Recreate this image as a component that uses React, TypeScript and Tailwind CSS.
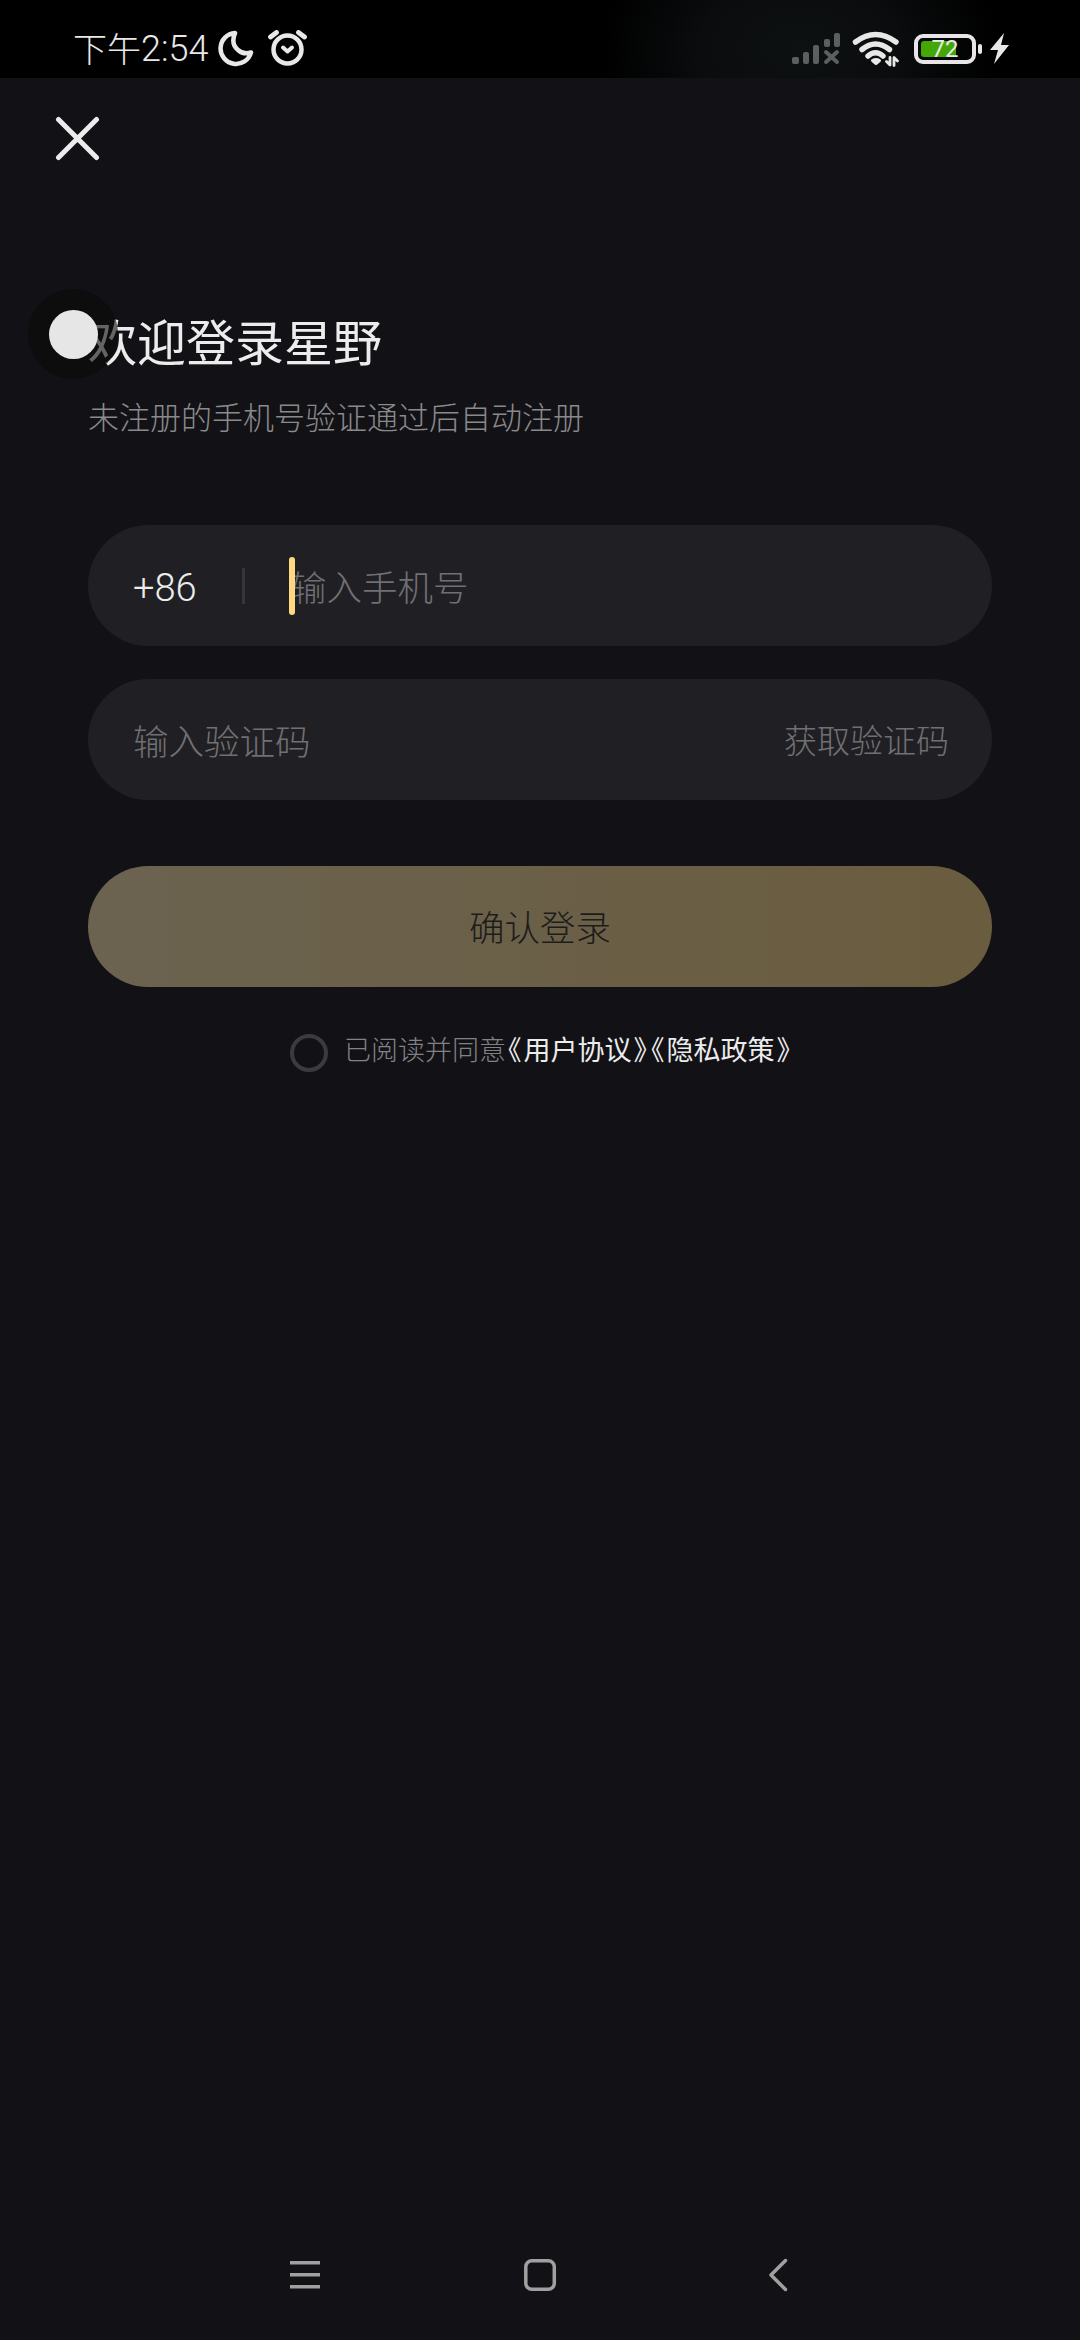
import type { ReactNode } from "react";

function SignalIcon() {
  return (
    <svg width="50" height="34" viewBox="790 32 50 34" fill="#5b5f60">
      <rect x="791" y="57" width="7" height="7" rx="2" />
      <rect x="802" y="52" width="6" height="12" rx="2" />
      <rect x="812" y="45" width="6" height="19" rx="2" />
      <rect x="823" y="39" width="6" height="8" rx="2" />
      <rect x="833" y="33" width="6" height="14" rx="2" />
      <path d="M825 52l11 10M836 52l-11 10" stroke="#5b5f60" strokeWidth="4" strokeLinecap="round" />
    </svg>
  );
}

function WifiIcon() {
  return (
    <svg width="48" height="38" viewBox="851 30 48 38" fill="none" stroke="#e8e8e8" strokeWidth="5.500" strokeLinecap="round">
      <path d="M854.500 42Q874.500 27 895 42" />
      <path d="M861 49.500Q874.500 38.500 888.500 49.500" />
      <path d="M867 56Q874.500 49.500 882 56" />
      <path d="M871.500 60.500Q875 58.500 878.500 60.500L875 63.500Z" strokeWidth="3" fill="#e8e8e8" strokeLinejoin="round" />
      <path d="M885.500 61.500l3.500 3.500V57.500M896.500 61l-3.500-3.500v8" strokeWidth="2.800" strokeLinejoin="round" />
    </svg>
  );
}

function MoonIcon() {
  return (
    <svg width="36" height="37" viewBox="218 30 36 37" fill="none" stroke="#e8e8e8" strokeWidth="4.500" strokeLinejoin="round">
      <path d="M235 33A15.500 15.500 0 1 0 251 52.500Q243.500 55 238 50Q230.500 43.500 235 33Z" />
    </svg>
  );
}

function AlarmIcon() {
  return (
    <svg width="40" height="37" viewBox="268 30 40 37" fill="none" stroke="#e8e8e8" strokeLinecap="round">
      <circle cx="287.500" cy="49.500" r="14" strokeWidth="4.500" />
      <path d="M270.500 37l6-4.500M304.500 37l-6-4.500" strokeWidth="4.800" />
      <path d="M283 47.500l4.500 4 4.500-4" strokeWidth="4" strokeLinejoin="round" />
    </svg>
  );
}

function Battery() {
  return (
    <div className="flex items-center">
      <div className="relative flex h-[30px] w-[62px] items-center rounded-[9px] border-[4.500px] border-[#e8e4e8] pl-[3px]">
        <div className="h-4 w-[35px] rounded-[3px] bg-[#43a806]" />
        <span className="absolute inset-0 flex items-center justify-center font-['Roboto',sans-serif] text-[24px] leading-none font-normal">
          72
        </span>
      </div>
      <div className="ml-[2px] h-[10px] w-1 rounded-sm bg-[#e8e8e8]" />
      <svg className="ml-[7px]" width="21" height="31" viewBox="0 0 21 31" fill="#e8e8e8">
        <path d="M15 0L1 17h8L5 31 20 12h-8z" />
      </svg>
    </div>
  );
}

function StatusBar() {
  return (
    <header className="flex h-[78px] items-start justify-between bg-black bg-[radial-gradient(ellipse_200px_140px_at_800px_50px,#0e1112_0%,#0a0c0d_50%,#000_100%)] pr-[70px] pl-[73px] text-[#e8e8e8]">
      <div className="flex pt-[30px]">
        <div className="flex w-[145px] text-[34px] leading-[35px] whitespace-nowrap">
          <span>下午</span>
          <span className="font-['Roboto',sans-serif] text-[36px] leading-[38px]">2:54</span>
        </div>
        <MoonIcon />
        <span className="w-[14px]" />
        <AlarmIcon />
      </div>
      <div className="flex pt-[30px]">
        <div className="mr-[11px] pt-[2px]">
          <SignalIcon />
        </div>
        <WifiIcon />
        <div className="ml-[14px] pt-[3px]">
          <Battery />
        </div>
      </div>
    </header>
  );
}

function Field({ children }: { children: ReactNode }) {
  return (
    <div className="flex h-[121px] items-center rounded-full bg-[#202024] pr-[43px] pl-[45px] text-[35.500px] text-[#707072]">
      {children}
    </div>
  );
}

function Bracket({ children }: { children: ReactNode }) {
  return (
    <span className="inline-block w-[17.500px] text-center [font-feature-settings:'halt']">{children}</span>
  );
}

function NavBar() {
  return (
    <nav className="mt-auto flex h-[130px] items-center justify-center">
      <svg width="500" height="36" viewBox="290 2257 500 36" fill="none" stroke="#a0a0a0" strokeWidth="3.500">
        <path d="M290 2262.700h30M290 2274.700h30M290 2286.700h30" />
        <rect x="525.800" y="2260.700" width="28.500" height="28.500" rx="6" />
        <path d="M785.500 2260.500L771 2275l14.500 14.500" strokeLinecap="round" strokeLinejoin="round" />
      </svg>
    </nav>
  );
}

function App() {
  return (
    <div className="flex h-[2340px] w-[1080px] flex-col overflow-hidden bg-[#121216] font-['Noto_Sans_CJK_SC',sans-serif] font-light">
      <StatusBar />

      <button className="mt-[38px] ml-[55px] size-[45px]">
        <svg width="45" height="45" viewBox="0 0 45 45" stroke="#ececec" strokeWidth="5" strokeLinecap="round">
          <path d="M3.500 3.500l38 38M41.500 3.500l-38 38" />
        </svg>
      </button>

      <main className="flex flex-col px-[88px] pt-[154px]">
        <div className="relative">
          <h1 className="text-[49px] leading-[50px] font-normal text-[#ececec]">欢迎登录星野</h1>
          {/* floating assistive ball */}
          <div className="absolute -top-[26px] -left-[60px] flex size-[90px] items-center justify-center rounded-full bg-[#0a0a0a]/60">
            <div className="size-[49px] rounded-full bg-[#e6e6e6]" />
          </div>
        </div>
        <p className="mt-[34px] text-[31px] leading-[34px] text-[#8a8a8c]">未注册的手机号验证通过后自动注册</p>

        <div className="mt-[92px] flex flex-col gap-[33px]">
          <Field>
            <span className="w-[109px] pt-[6px] font-['Roboto',sans-serif] text-[38px] text-[#ececec]">+86</span>
            <span className="h-9 w-[3px] bg-[#363639]" />
            <div className="relative ml-[46px]">
              <span>输入手机号</span>
              <span className="absolute -top-[2px] -left-[2px] h-[58px] w-[6px] rounded-full bg-[#ffd982]" />
            </div>
          </Field>
          <Field>
            <span className="flex-1">输入验证码</span>
            <button className="text-[33px]">获取验证码</button>
          </Field>
        </div>

        <button className="mt-[66px] h-[121px] rounded-full bg-linear-to-r from-[#6b6350] to-[#6a5c3e] pb-[2px] text-[35.500px] text-[#1d1c1c]">
          确认登录
        </button>

        <div className="mt-[44px] flex pl-[202px]">
          <span className="mt-[3px] size-[38px] rounded-full border-4 border-[#3b3b3e]" />
          <p className="ml-4 text-[27px] leading-9 whitespace-nowrap text-[#828284]">
            已阅读并同意
            <span className="font-normal text-[#ececec]">
              <Bracket>《</Bracket>用户协议<Bracket>》</Bracket>
              <Bracket>《</Bracket>隐私政策<Bracket>》</Bracket>
            </span>
          </p>
        </div>
      </main>

      <NavBar />
    </div>
  );
}

export default App;
